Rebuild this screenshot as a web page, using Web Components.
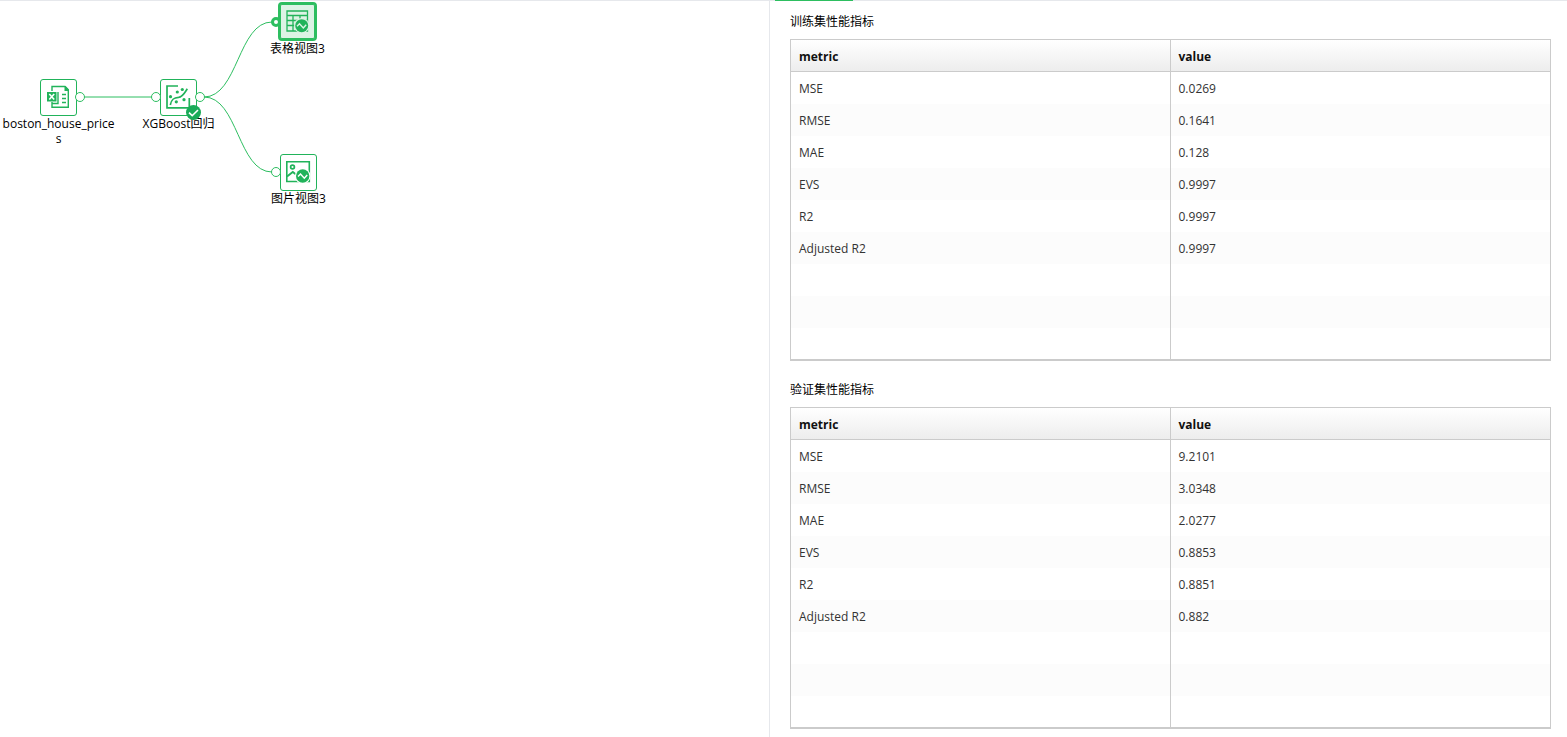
<!DOCTYPE html>
<html lang="zh-CN">
<head>
<meta charset="UTF-8">
<meta name="viewport" content="width=device-width, initial-scale=1">
<title>XGBoost回归</title>
<style>
  html, body {
    height: 100%;
    margin: 0;
  }

  body {
    background: #fff;
    color: #000;
    font: 12px "Open Sans", "Noto Sans CJK SC", sans-serif;
    --green: #21b35a;
    --light-green: #2dbe60;
    --line: #e6e8ec;
  }
</style>
</head>
<body>
<split-workspace>
  <flow-canvas slot="canvas">
    <flow-node icon="excel" ports="right" style="--x: 40px; --y: 79px">boston_house_prices</flow-node>
    <flow-node icon="regression" ports="left right" done style="--x: 160px; --y: 79px">XGBoost回归</flow-node>
    <flow-node icon="table" ports="left" selected style="--x: 279px; --y: 3px">表格视图3</flow-node>
    <flow-node icon="image" ports="left" style="--x: 280px; --y: 154px">图片视图3</flow-node>
  </flow-canvas>
  <result-panel slot="panel">
    <metric-table values="0.0269,0.1641,0.128,0.9997,0.9997,0.9997">训练集性能指标</metric-table>
    <metric-table values="9.2101,3.0348,2.0277,0.8853,0.8851,0.882">验证集性能指标</metric-table>
  </result-panel>
</split-workspace>

<script>
/**
 * SplitWorkspace - canvas on the left, results on the right
 */
class SplitWorkspace extends HTMLElement {
  constructor() {
    super();
    this.attachShadow({ mode: 'open' });
    this.shadowRoot.innerHTML = `
      <style>
        :host {
          display: grid;
          grid-template-columns: 770fr 797fr;
          min-height: 100%;
        }

        .canvas {
          box-sizing: border-box;
          border-top: 1px solid var(--line);
          border-right: 1px solid var(--line);
        }
      </style>
      <div class="canvas"><slot name="canvas"></slot></div>
      <slot name="panel"></slot>
    `;
  }
}

/**
 * FlowCanvas - free canvas with the links between nodes
 */
class FlowCanvas extends HTMLElement {
  constructor() {
    super();
    this.attachShadow({ mode: 'open' });
    this.shadowRoot.innerHTML = `
      <style>
        :host {
          display: block;
          position: relative;
          height: 100%;
          margin-top: -1px;
        }

        svg {
          position: absolute;
          inset: 0;
          width: 100%;
          height: 100%;
          fill: none;
          stroke: var(--light-green);
        }
      </style>
      <svg aria-hidden="true">
        <path d="M84 97H152"/>
        <path d="M204 97C238 97 238 22 272 22"/>
        <path d="M204 97C238 97 238 172 272 172"/>
      </svg>
      <slot></slot>
    `;
  }
}

// Glyphs on a 37x37 grid, the size of a node box
const ICONS = {
  excel: `
    <g fill="none" stroke="currentColor" stroke-width="1.4">
      <path d="M12 12V7.5H25L28.3 11V28.3H12V23"/>
      <path d="M12 24.5H18V13"/>
      <path d="M22 15.5H26M22 19.5H26M22 23.5H26"/>
    </g>
    <path d="M24.5 7H25.5L29 10.5V12H24.5Z"/>
    <path d="M7 13H16.5V22.5H7Z"/>
    <path d="M9.3 15L14.2 20.5M14.2 15L9.3 20.5" stroke="#fff" stroke-width="1.6"/>`,
  regression: `
    <g fill="none" stroke="currentColor" stroke-width="1.7">
      <path d="M18 7H7V28.8H29.3V19"/>
      <path d="M10.3 26C11.5 20 14 18.5 18.5 18.3C23 18 24.5 14 27.3 9.8"/>
    </g>
    <circle cx="17.3" cy="13" r="1.6"/>
    <circle cx="22.3" cy="10.5" r="1.6"/>
    <circle cx="10.5" cy="17.7" r="1.6"/>
    <circle cx="16.3" cy="22.8" r="1.6"/>
    <circle cx="24" cy="20.7" r="1.6"/>`,
  table: `
    <path d="M8 8H28.5V28H8ZM8 12.5H28.5M8 17.5H28.5M8 22.5H28.5M14 12.5V28M21 12.5V28" fill="none" stroke="currentColor" stroke-width="1.3"/>
    <circle cx="22.7" cy="22.7" r="7.6" fill="#dcf3e5"/>
    <circle cx="22.7" cy="22.7" r="6.5"/>
    <path d="M18 23.3L20.5 20.7L24.3 25L27.2 21.7" fill="none" stroke="#dcf3e5" stroke-width="1.4"/>`,
  image: `
    <path d="M6.8 7.8H29.3V27.5H6.8Z" fill="none" stroke="currentColor" stroke-width="1.6"/>
    <circle cx="12.5" cy="13" r="1.9" fill="none" stroke="currentColor" stroke-width="1.7"/>
    <path d="M7 22.5L12.8 18L16 20.5" fill="none" stroke="currentColor" stroke-width="1.9"/>
    <circle cx="22.7" cy="22" r="7.8" fill="#fff"/>
    <circle cx="22.7" cy="22" r="6.7"/>
    <path d="M18 22.6L20.5 20L24.3 24.3L27.2 21" fill="none" stroke="#fff" stroke-width="1.4"/>`
};

/**
 * FlowNode - one step, placed with --x and --y
 */
class FlowNode extends HTMLElement {
  constructor() {
    super();
    this.attachShadow({ mode: 'open' });
  }

  connectedCallback() {
    const icon = ICONS[this.getAttribute('icon')] || '';
    const ports = (this.getAttribute('ports') || '').split(' ')
      .map(side => `<i class="port ${side}"></i>`).join('');
    const badge = this.hasAttribute('done') ? `
      <svg class="badge" viewBox="0 0 15 15" aria-hidden="true">
        <circle cx="7.5" cy="7.5" r="7.5" fill="#1aab58"/>
        <path d="M3 7.7L6.2 10.7L12 5" fill="none" stroke="#fff" stroke-width="1.6"/>
      </svg>` : '';

    this.shadowRoot.innerHTML = `
      <style>
        :host {
          position: absolute;
          left: var(--x);
          top: var(--y);
          display: flex;
          flex-direction: column;
          align-items: center;
          width: 37px;
          color: var(--green);
        }

        .box {
          position: relative;
          box-sizing: border-box;
          width: 37px;
          height: 37px;
          border: 1px solid;
          border-radius: 3px;
          background: #fff;
        }

        .box > .icon {
          display: block;
          width: 37px;
          height: 37px;
          margin: -1px;
          fill: currentColor;
        }

        .port {
          position: absolute;
          top: 12px;
          box-sizing: border-box;
          width: 10px;
          height: 10px;
          border: 1px solid var(--light-green);
          border-radius: 50%;
          background: #fff;
        }

        .left { left: -10px; }
        .right { right: -9px; }

        :host([selected]) .box {
          margin-bottom: 1px;
          background: #dcf3e5;
          outline: 2px solid var(--light-green);
          outline-offset: -1px;
          box-shadow: inset 0 0 0 1px var(--light-green);
        }

        :host([selected]) .port {
          top: 13px;
          left: -9px;
          border-width: 3px;
        }

        .badge {
          position: absolute;
          right: -5px;
          bottom: -5px;
          width: 15px;
          height: 15px;
        }

        .label {
          width: 117px;
          color: #000;
          line-height: 15px;
          text-align: center;
          word-break: break-all;
        }
      </style>
      <div class="box">
        <svg class="icon" viewBox="0 0 37 37" aria-hidden="true">${icon}</svg>
        ${ports}${badge}
      </div>
      <div class="label"><slot></slot></div>
    `;
  }
}

/**
 * ResultPanel - column of result tables under the tab indicator
 */
class ResultPanel extends HTMLElement {
  constructor() {
    super();
    this.attachShadow({ mode: 'open' });
    this.shadowRoot.innerHTML = `
      <style>
        :host { display: block; }

        .tabs {
          height: 1px;
          padding-left: 5px;
          background: var(--line);
        }

        .active {
          width: 78px;
          height: 1px;
          background: var(--light-green);
        }

        .content {
          display: flex;
          flex-direction: column;
          gap: 20px;
          padding: 12px 16px 8px 20px;
        }
      </style>
      <div class="tabs"><div class="active"></div></div>
      <div class="content"><slot></slot></div>
    `;
  }
}

const METRICS = ['MSE', 'RMSE', 'MAE', 'EVS', 'R2', 'Adjusted R2'];
const ROW_COUNT = 9;

/**
 * MetricTable - titled metric/value table, padded with empty rows
 */
class MetricTable extends HTMLElement {
  constructor() {
    super();
    this.attachShadow({ mode: 'open' });
  }

  connectedCallback() {
    const values = this.getAttribute('values').split(',');
    let rows = '';
    for (let i = 0; i < ROW_COUNT; i++) {
      rows += `<tr><td>${METRICS[i] || ''}</td><td>${values[i] || ''}</td></tr>`;
    }

    this.shadowRoot.innerHTML = `
      <style>
        :host { display: block; }

        .title {
          margin-bottom: 8px;
          line-height: 18px;
        }

        .frame {
          border: 1px solid #cbcbcb;
          border-bottom-width: 2px;
        }

        table {
          width: 100%;
          table-layout: fixed;
          border-spacing: 0;
          color: #333;
        }

        th, td {
          box-sizing: border-box;
          height: 32px;
          padding: 2px 8px 0;
          line-height: 16px;
          text-align: left;
        }

        th {
          border-bottom: 1px solid #cbcbcb;
          background: linear-gradient(#fff, #ededed);
          color: #111;
          font-weight: 700;
        }

        th:first-child { width: calc(50% + 1px); }
        tr > :first-child { border-right: 1px solid #cbcbcb; }
        tbody tr:nth-child(even) { background: #fcfcfc; }
        tbody tr:last-child td { height: 31px; }
      </style>
      <div class="title" id="title"><slot></slot></div>
      <div class="frame">
        <table aria-labelledby="title">
          <thead><tr><th scope="col">metric</th><th scope="col">value</th></tr></thead>
          <tbody>${rows}</tbody>
        </table>
      </div>
    `;
  }
}

customElements.define('split-workspace', SplitWorkspace);
customElements.define('flow-canvas', FlowCanvas);
customElements.define('flow-node', FlowNode);
customElements.define('result-panel', ResultPanel);
customElements.define('metric-table', MetricTable);
</script>
</body>
</html>
